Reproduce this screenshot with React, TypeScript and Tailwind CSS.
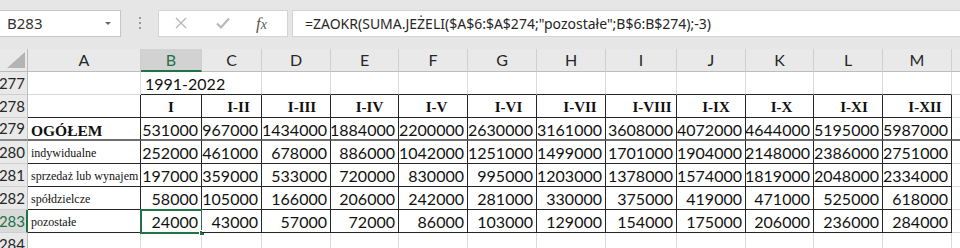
import clsx from "clsx";

const headers = ["A", "B", "C", "D", "E", "F", "G", "H", "I", "J", "K", "L", "M"];

const months = ["I", "I-II", "I-III", "I-IV", "I-V", "I-VI", "I-VII", "I-VIII", "I-IX", "I-X", "I-XI", "I-XII"];

// headers of row 278 are not exactly centred in the sheet
const monthShift = [
  "pl-[0px]",
  "pl-[14px]",
  "pl-[12px]",
  "pl-[10px]",
  "pl-[7px]",
  "pl-[13px]",
  "pl-[18px]",
  "pl-[22px]",
  "pl-[10px]",
  "pl-[4px]",
  "pl-[12px]",
  "pl-[16px]",
];

const rows = [
  {
    n: 279,
    label: "OGÓŁEM",
    bold: true,
    values: [531000, 967000, 1434000, 1884000, 2200000, 2630000, 3161000, 3608000, 4072000, 4644000, 5195000, 5987000],
  },
  {
    n: 280,
    label: "indywidualne",
    values: [252000, 461000, 678000, 886000, 1042000, 1251000, 1499000, 1701000, 1904000, 2148000, 2386000, 2751000],
  },
  {
    n: 281,
    label: "sprzedaż lub wynajem",
    values: [197000, 359000, 533000, 720000, 830000, 995000, 1203000, 1378000, 1574000, 1819000, 2048000, 2334000],
  },
  {
    n: 282,
    label: "spółdzielcze",
    values: [58000, 105000, 166000, 206000, 242000, 281000, 330000, 375000, 419000, 471000, 525000, 618000],
  },
  {
    n: 283,
    label: "pozostałe",
    values: [24000, 43000, 57000, 72000, 86000, 103000, 129000, 154000, 175000, 206000, 236000, 284000],
  },
];

type CellProps = {
  r?: boolean;
  b?: boolean;
  thick?: boolean;
  className?: string;
  children?: React.ReactNode;
};

function Cell({ r, b, thick, className, children }: CellProps) {
  return (
    <div
      className={clsx(
        "flex h-[23px] items-end overflow-hidden border-r bg-white",
        r ? "border-r-[#262626]" : "border-r-[#d9d9d9]",
        thick ? "border-b-2 border-b-[#6e6e6e]" : "border-b",
        !thick && (b ? "border-b-[#262626]" : "border-b-[#d9d9d9]"),
        className
      )}
    >
      {children}
    </div>
  );
}

function RowHead({ n, active, thick }: { n: number; active?: boolean; thick?: boolean }) {
  return (
    <div
      className={clsx(
        "flex h-[23px] items-center justify-end overflow-hidden text-[15px] leading-none",
        thick ? "border-b-2 border-b-[#8a8a8a]" : "border-b border-b-[#cfcfcf]",
        active
          ? "border-r-2 border-r-[#217346] bg-[#dadada] pr-[1px] text-[#217346]"
          : "border-r border-r-[#bdbdbd] bg-[#e9e9e9] pr-[2px] text-[#262626]"
      )}
    >
      <span className="whitespace-nowrap">{n}</span>
    </div>
  );
}

function Toolbar() {
  return (
    <div className="flex h-[49px] items-start bg-[#e6e6e6] pt-[10px] font-['Noto_Sans',sans-serif]">
      <div className="flex h-[27px] w-[121px] items-center justify-between border border-l-0 border-[#c6c6c6] bg-white pr-[9px] pl-[7px]">
        <span className="text-[15px] text-[#333]">B283</span>
        <div className="h-0 w-0 border-x-[3px] border-t-[3px] border-x-transparent border-t-[#666]"></div>
      </div>
      <div className="flex w-[37px] flex-col items-center gap-[3px] pt-[7px]">
        <div className="size-[2px] bg-[#999]"></div>
        <div className="size-[2px] bg-[#999]"></div>
        <div className="size-[2px] bg-[#999]"></div>
      </div>
      <div className="flex h-[27px] w-[130px] items-center border border-[#d4d4d4] bg-white">
        <svg width="42" height="27" viewBox="0 0 42 27" className="shrink-0">
          <path d="M17 8 L27 18 M27 8 L17 18" stroke="#b8b8b8" strokeWidth="1.4" fill="none" />
        </svg>
        <svg width="42" height="27" viewBox="0 0 42 27" className="shrink-0">
          <path d="M16 13.5 L20 17.5 L28 8.5" stroke="#b8b8b8" strokeWidth="2.2" fill="none" />
        </svg>
        <span className="ml-[13px] font-['Liberation_Serif',serif] text-[17px] text-[#595959] italic">
          f<span className="text-[14px]">x</span>
        </span>
      </div>
      <div className="ml-[4px] flex h-[27px] flex-1 items-center border border-r-0 border-[#d4d4d4] bg-white pl-[12px]">
        <span className="text-[14px] whitespace-nowrap text-[#262626]">
          =ZAOKR(SUMA.JEŻELI($A$6:$A$274;"pozostałe";B$6:B$274);-3)
        </span>
      </div>
    </div>
  );
}

export default function App() {
  return (
    <div className="h-[248px] w-[960px] overflow-hidden bg-white">
      <Toolbar />
      <div className="grid grid-cols-[28px_113px_61px_60px_69px_68px_69px_69px_69px_71px_69px_68px_69px_69px_8px] font-['Lato',sans-serif] text-[#111]">
        {/* column headers */}
        <div className="relative h-[23px] border-r border-b border-r-[#bdbdbd] border-b-[#bdbdbd] bg-[#e9e9e9]">
          <div className="absolute right-[2px] bottom-[3px] h-0 w-0 border-b-[16px] border-l-[18px] border-b-[#b4b4b4] border-l-transparent"></div>
        </div>
        {headers.map((h) => (
          <div
            key={h}
            className={clsx(
              "flex h-[23px] items-center justify-center border-r border-r-[#cfcfcf] text-[16px] leading-none",
              h === "B"
                ? "border-b-2 border-b-[#217346] bg-[#d2d2d2] text-[#217346]"
                : "border-b border-b-[#bdbdbd] bg-[#e9e9e9] text-[#262626]"
            )}
          >
            {h}
          </div>
        ))}
        <div className="h-[23px] border-b border-b-[#bdbdbd] bg-[#e9e9e9]"></div>

        {/* 277 */}
        <RowHead n={277} />
        <Cell />
        <Cell b className="col-span-2 pb-[2px] pl-[4px] text-[16px] leading-[16px]">
          <span className="whitespace-nowrap">1991-2022</span>
        </Cell>
        {months.slice(2).map((m) => (
          <Cell key={m} b />
        ))}
        <Cell className="border-r-0" />

        {/* 278 */}
        <RowHead n={278} />
        <Cell r b />
        {months.map((m, i) => (
          <Cell
            key={m}
            r
            b
            className={clsx(
              "justify-center pb-[2px] font-['Liberation_Serif',serif] text-[15px] leading-[15px] font-bold",
              monthShift[i]
            )}
          >
            <span className="whitespace-nowrap">{m}</span>
          </Cell>
        ))}
        <Cell className="border-r-0" />

        {rows.map((row) => (
          <div key={row.n} className="contents">
            <RowHead n={row.n} active={row.n === 283} thick={row.bold} />
            <Cell
              r
              b
              thick={row.bold}
              className={clsx(
                "pl-[3px] font-['Liberation_Serif',serif]",
                row.bold ? "pb-[1px] text-[15.5px] leading-[15px] font-bold" : "pb-[3px] text-[12px] leading-[13px]"
              )}
            >
              <span className="whitespace-nowrap">{row.label}</span>
            </Cell>
            {row.values.map((v, i) => (
              <Cell
                key={i}
                r
                b
                thick={row.bold}
                className={clsx(
                  "relative justify-end overflow-visible pr-[3px] text-[16px] leading-[16px]",
                  row.bold ? "pb-[1px]" : "pb-[2px]",
                  row.n === 283 && i === 0 && "outline-2 -outline-offset-1 outline-[#217346]"
                )}
              >
                <span className="whitespace-nowrap">{v}</span>
                {row.n === 283 && i === 0 && (
                  <div className="absolute -right-[4px] -bottom-[4px] size-[6px] border border-white bg-[#217346]"></div>
                )}
              </Cell>
            ))}
            <Cell thick={row.bold} className="border-r-0" />
          </div>
        ))}

        {/* 284 */}
        <RowHead n={284} />
        {headers.map((h) => (
          <Cell key={h} />
        ))}
        <Cell className="border-r-0" />
      </div>
    </div>
  );
}
